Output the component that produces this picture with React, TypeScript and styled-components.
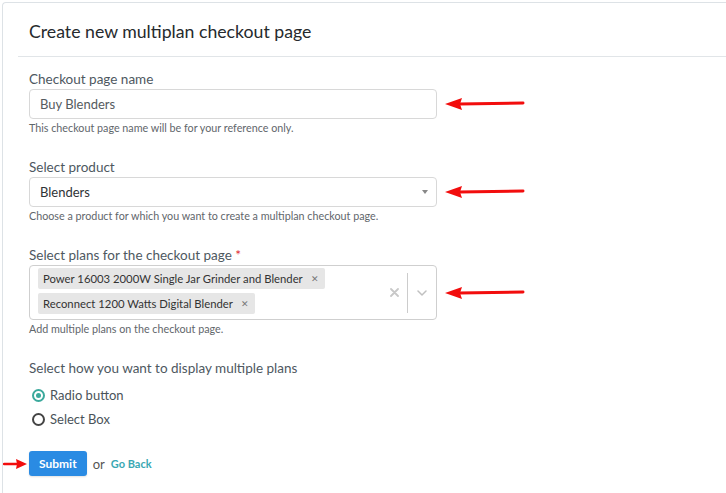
import React from "react";
import styled, { createGlobalStyle } from "styled-components";

const GlobalStyle = createGlobalStyle`
  html, body { margin: 0; padding: 0; background: #ffffff; }
  body { font-family: Lato, "Open Sans", Arial, sans-serif; -webkit-font-smoothing: antialiased; }
  * { box-sizing: border-box; }
`;

const Page = styled.div`
  padding: 2px 0 0 2px;
  min-height: 100vh;
`;

const Card = styled.section`
  border-top: 1px solid #dde2e6;
  border-left: 1px solid #dde2e6;
  border-top-left-radius: 4px;
  min-height: calc(100vh - 2px);
`;

const Header = styled.header`
  margin-left: 15px;
  height: 54px;
  border-bottom: 1px solid #e1e5e8;
  display: flex;
  align-items: center;
  padding: 3px 0 0 11px;
`;

const Title = styled.h1`
  margin: 0;
  font-size: 17.7px;
  font-weight: 400;
  color: #262a2d;
`;

const Body = styled.div`
  padding: 14px 0 0 26px;
`;

const Group = styled.div<{ $gap?: number }>`
  margin-bottom: ${(p) => p.$gap ?? 24}px;
`;

const Label = styled.label`
  display: block;
  font-size: 13.5px;
  line-height: 16px;
  color: #4e585f;
  margin-bottom: 2px;
`;

const Req = styled.span`
  color: #e0262b;
`;

const FieldRow = styled.div`
  display: flex;
  align-items: center;
  gap: 8px;
`;

const TextInput = styled.div`
  width: 408px;
  height: 30px;
  border: 1px solid #d8d8d8;
  border-radius: 4px;
  padding: 0 10px;
  display: flex;
  align-items: center;
  font-size: 13px;
  color: #555b60;
`;

const SelectBox = styled(TextInput)`
  justify-content: space-between;
  color: #2f3336;
  padding-right: 8px;
`;

const Caret = styled.span`
  width: 0;
  height: 0;
  border-left: 3px solid transparent;
  border-right: 3px solid transparent;
  border-top: 4px solid #888;
`;

const Help = styled.div`
  font-size: 10.75px;
  line-height: 14px;
  color: #5f666b;
  margin-top: 2px;
`;

const MultiBox = styled.div`
  width: 408px;
  min-height: 55px;
  border: 1px solid #cfcfcf;
  border-radius: 4px;
  display: flex;
`;

const Values = styled.div`
  flex: 1;
  display: flex;
  flex-wrap: wrap;
  align-content: flex-start;
  gap: 4px 30px;
  padding: 2px 8px 4px;
`;

const Tag = styled.div`
  display: flex;
  align-items: center;
  height: 21px;
  background: #e6e6e6;
  border-radius: 2px;
  font-size: 11.3px;
  color: #333;
  padding-left: 5px;
`;

const TagRemove = styled.span`
  padding: 0 6px 0 8px;
  font-size: 9px;
  color: #777;
`;

const Indicators = styled.div`
  display: flex;
  align-items: stretch;
`;

const IconSlot = styled.div<{ $w: number }>`
  width: ${(p) => p.$w}px;
  display: flex;
  align-items: center;
  justify-content: center;
`;

const Separator = styled.span`
  width: 1px;
  background: #cccccc;
  margin: 7px 0 6px;
`;

const Options = styled.div`
  margin-top: 7px;
`;

const Option = styled.div`
  display: flex;
  align-items: center;
  gap: 5px;
  height: 24px;
  padding-left: 3px;
  font-size: 13px;
  color: #4a5359;
`;

const Radio = styled.span<{ $checked?: boolean }>`
  width: 13px;
  height: 13px;
  border-radius: 50%;
  border: 2px solid ${(p) => (p.$checked ? "#3ba99c" : "#444")};
  display: flex;
  align-items: center;
  justify-content: center;
  &::after {
    content: "";
    width: 5px;
    height: 5px;
    border-radius: 50%;
    background: ${(p) => (p.$checked ? "#3ba99c" : "transparent")};
  }
`;

const Actions = styled.div`
  display: flex;
  align-items: center;
  margin: 20px 0 0 -26px;
`;

const SubmitButton = styled.button`
  height: 25px;
  margin-left: 2px;
  padding: 0 10px;
  background: #2a8be3;
  color: #fff;
  border: none;
  border-radius: 3px;
  font-family: inherit;
  font-size: 12px;
  font-weight: 700;
  box-shadow: 0 1px 2px rgba(0, 0, 0, 0.12);
`;

const Or = styled.span`
  margin: 0 6px 0 6px;
  font-size: 13px;
  color: #555;
`;

const GoBack = styled.a`
  font-size: 11px;
  font-weight: 700;
  color: #3aa8b3;
  text-decoration: none;
`;

const Arrow = ({ w = 80 }: { w?: number }) => (
  <svg width={w} height="14" viewBox={`0 0 ${w} 14`}>
    <polygon points={`0,7 17,1 15,7 17,13`} fill="#f20d0d" />
    <line x1="14" y1="7" x2={w - 2} y2="6" stroke="#f20d0d" strokeWidth="3" strokeLinecap="round" />
  </svg>
);

const SmallArrow = () => (
  <svg width="24" height="10" viewBox="0 0 24 10">
    <polygon points="24,5 13,0 14,5 13,10" fill="#f20d0d" />
    <line x1="1" y1="5" x2="15" y2="5" stroke="#f20d0d" strokeWidth="2.5" strokeLinecap="round" />
  </svg>
);

export default function App() {
  return (
    <>
      <GlobalStyle />
      <Page>
        <Card>
          <Header>
            <Title>Create new multiplan checkout page</Title>
          </Header>
          <Body>
            <Group>
              <Label>Checkout page name</Label>
              <FieldRow>
                <TextInput>Buy Blenders</TextInput>
                <Arrow />
              </FieldRow>
              <Help>This checkout page name will be for your reference only.</Help>
            </Group>

            <Group>
              <Label>Select product</Label>
              <FieldRow>
                <SelectBox>
                  Blenders
                  <Caret />
                </SelectBox>
                <Arrow />
              </FieldRow>
              <Help>Choose a product for which you want to create a multiplan checkout page.</Help>
            </Group>

            <Group>
              <Label>
                Select plans for the checkout page <Req>*</Req>
              </Label>
              <FieldRow>
                <MultiBox>
                  <Values>
                    <Tag>
                      Power 16003 2000W Single Jar Grinder and Blender<TagRemove>✕</TagRemove>
                    </Tag>
                    <Tag>
                      Reconnect 1200 Watts Digital Blender<TagRemove>✕</TagRemove>
                    </Tag>
                  </Values>
                  <Indicators>
                    <IconSlot $w={26}>
                      <svg width="9" height="9" viewBox="0 0 9 9">
                        <path d="M1 1 L8 8 M8 1 L1 8" stroke="#c8c8c8" strokeWidth="1.8" strokeLinecap="round" />
                      </svg>
                    </IconSlot>
                    <Separator />
                    <IconSlot $w={28}>
                      <svg width="10" height="6" viewBox="0 0 10 6">
                        <path d="M1 1 L5 5 L9 1" fill="none" stroke="#c0c0c0" strokeWidth="1.5" strokeLinecap="round" strokeLinejoin="round" />
                      </svg>
                    </IconSlot>
                  </Indicators>
                </MultiBox>
                <Arrow />
              </FieldRow>
              <Help>Add multiple plans on the checkout page.</Help>
            </Group>

            <Group $gap={0}>
              <Label>Select how you want to display multiple plans</Label>
              <Options>
                <Option>
                  <Radio $checked />
                  Radio button
                </Option>
                <Option>
                  <Radio />
                  Select Box
                </Option>
              </Options>
            </Group>

            <Actions>
              <SmallArrow />
              <SubmitButton>Submit</SubmitButton>
              <Or>or</Or>
              <GoBack href="#">Go Back</GoBack>
            </Actions>
          </Body>
        </Card>
      </Page>
    </>
  );
}
